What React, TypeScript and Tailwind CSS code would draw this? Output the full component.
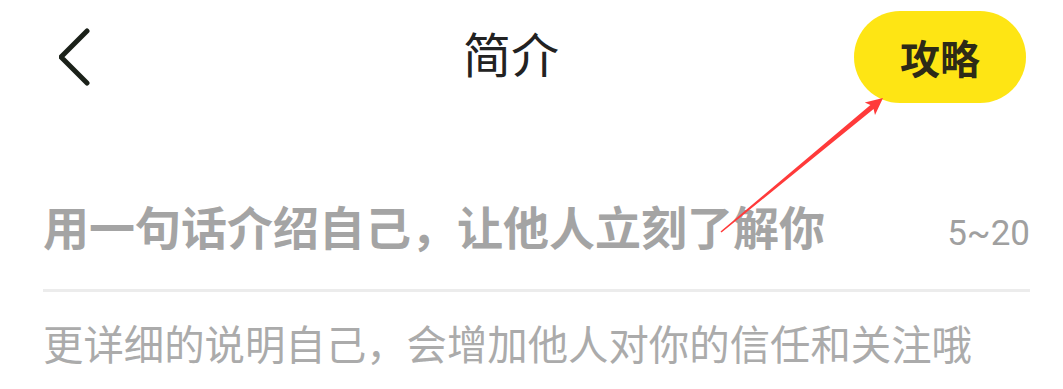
const cjk = { fontFamily: '"Noto Sans CJK SC", "Noto Sans", sans-serif' };

function BackIcon() {
  return (
    <svg width="40" height="60" viewBox="0 0 40 60" fill="none">
      <polyline
        points="28,3 2,29 28,55"
        stroke="#1b2119"
        strokeWidth="5"
        strokeLinecap="round"
        strokeLinejoin="round"
      />
    </svg>
  );
}

export default function App() {
  return (
    <div className="relative w-[1063px] h-[389px] bg-white overflow-hidden" style={cjk}>
      {/* header */}
      <div className="flex items-center h-[113px]">
        <div className="w-[168px] pl-[59px] pt-[2px] flex items-center">
          <BackIcon />
        </div>
        <div className="flex-1 text-center text-[48px] leading-none text-[#222222] pb-[10px]">简介</div>
        <button className="w-[172px] h-[92px] mr-[37px] rounded-full bg-[#fee514] text-[40px] font-bold leading-none text-[#2d2a17]">
          攻略
        </button>
      </div>

      {/* one-line intro */}
      <div className="pl-[43px] pr-[33px] mt-[89px]">
        <div className="flex items-baseline justify-between pb-[38px] border-b-[3px] border-[#ececec]">
          <span className="text-[46px] font-bold leading-[46px] text-[#a4a4a4]">
            用一句话介绍自己，让他人立刻了解你
          </span>
          <span
            className="text-[35px] leading-none text-[#a0a0a0]"
            style={{ fontFamily: 'Roboto, "Noto Sans CJK SC", sans-serif' }}
          >
            5~20
          </span>
        </div>
        <div className="mt-[30px] text-[40.4px] leading-[42px] text-[#ababab]">
          更详细的说明自己，会增加他人对你的信任和关注哦
        </div>
      </div>

      {/* annotation arrow */}
      <svg className="absolute inset-0 pointer-events-none" width="1063" height="389">
        <polygon
          points="721.5,232.6 720.5,231.4 870.4,105.1 864.8,102.6 883,98 875,115 873.6,108.9"
          fill="#ff3a3a"
        />
      </svg>
    </div>
  );
}
